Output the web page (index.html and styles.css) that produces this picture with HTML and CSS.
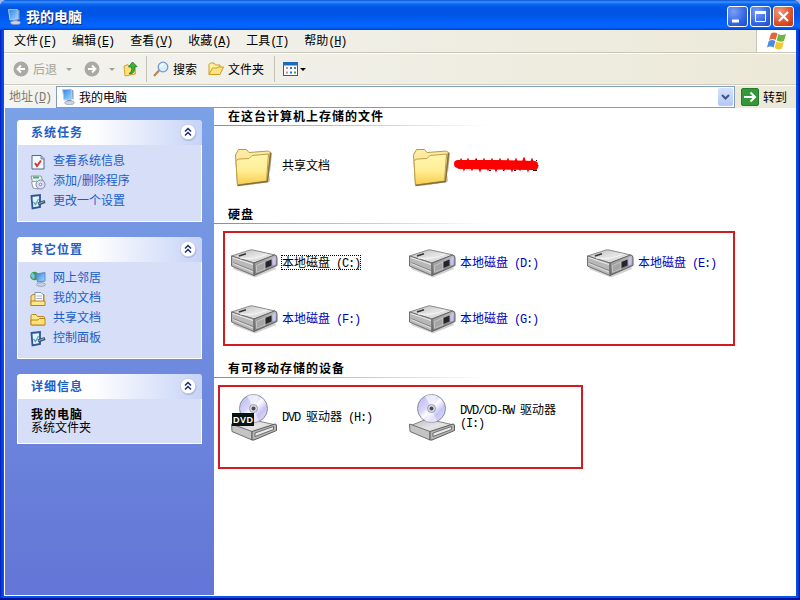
FILE: index.html
```html
<!DOCTYPE html>
<html lang="zh-CN">
<head>
    <meta charset="UTF-8">
    <title>我的电脑</title>
    <link rel="stylesheet" href="styles.css">
</head>
<body>
    <!-- Shared icons -->
    <svg class="sprite" width="0" height="0">
        <defs>
            <linearGradient id="gFolder" x1="0" y1="0" x2="0" y2="1">
                <stop offset="0" stop-color="#fff6b0"/>
                <stop offset="0.55" stop-color="#ffed93"/>
                <stop offset="1" stop-color="#f8cb4c"/>
            </linearGradient>
            <linearGradient id="gTop" x1="0" y1="0" x2="1" y2="1">
                <stop offset="0" stop-color="#b5b5b5"/>
                <stop offset="0.5" stop-color="#e4e4e4"/>
                <stop offset="1" stop-color="#d0d0d0"/>
            </linearGradient>
            <linearGradient id="gSide" x1="0" y1="0" x2="0" y2="1">
                <stop offset="0" stop-color="#bdbdbd"/>
                <stop offset="1" stop-color="#747474"/>
            </linearGradient>
            <linearGradient id="gDisc" x1="0" y1="0" x2="1" y2="1">
                <stop offset="0" stop-color="#b9b7ec"/>
                <stop offset="0.38" stop-color="#d7d5fa"/>
                <stop offset="0.5" stop-color="#ffffff"/>
                <stop offset="0.7" stop-color="#c5c2f5"/>
                <stop offset="1" stop-color="#e9e8ff"/>
            </linearGradient>
            <linearGradient id="gScreen" x1="0" y1="0" x2="1" y2="1">
                <stop offset="0" stop-color="#2f7fe0"/>
                <stop offset="1" stop-color="#a3ddff"/>
            </linearGradient>
        </defs>
        <symbol id="folder" viewBox="0 0 48 48">
            <path d="M7 46 L39 41 L42 12 L39 10 L40 40 Z" fill="#8a7444" opacity="0.6"/>
            <path d="M5.500 14 L8.500 8.500 H16.500 L19 11.500 L38.500 10 L40.500 12 L37.500 40 L7.500 44 Z" fill="#ffeaa0" stroke="#b49a4c"/>
            <path d="M6 20.500 Q6.500 18.500 9 18 L19 17.500 L22 14.500 L38.500 13 L36.500 40 L7.500 44 Z" fill="url(#gFolder)" stroke="#bd9f48"/>
            <path d="M7.500 44.500 L37.500 40.500 L40.500 12" fill="none" stroke="#84703f" stroke-width="1.500"/>
        </symbol>
        <symbol id="drive" viewBox="0 0 48 48">
            <path d="M4 28 L24 36 L45 28 L46 30 L25 38.500 L3 30 Z" fill="#777" opacity="0.35"/>
            <path d="M1.500 17 L20 11 Q21 10.600 23 11 L45 16 L24 24 Z" fill="url(#gTop)" stroke="#8a8a8a"/>
            <path d="M1.500 17 L24 24 V36.500 L1.500 27 Z" fill="#b8b8b8" stroke="#707070"/>
            <path d="M2.500 18.500 L23 25.500" stroke="#ededed"/>
            <path d="M3 23.500 L23 31.500" stroke="#777" stroke-width="0.800"/>
            <path d="M3 24.500 L23 33" stroke="#e2e2e2"/>
            <path d="M24 24 L44.500 16 Q47 16 47 19 V26.500 L24 36.500 Z" fill="url(#gSide)" stroke="#606060"/>
            <path d="M26.500 26.500 L35 23 V30 L26.500 33.500 Z" fill="#a5a5a5" stroke="#ddd" stroke-width="0.600"/>
            <path d="M35.500 23 L41.500 20.500 V26.500 L35.500 29 Z" fill="#24242c"/>
            <path d="M42.500 19 L45.500 18 V25.500 L42.500 26.500 Z" fill="#c6c3f4"/>
            <path d="M9 17 L16 14.800" stroke="#333" stroke-width="1.500"/>
            <path d="M10 19 Q25 21 37 15" fill="none" stroke="#f8f8f8"/>
        </symbol>
        <symbol id="optical" viewBox="0 0 48 48">
            <path d="M1.500 33 L19 26 L46 32 L26 41 Z" fill="url(#gTop)" stroke="#858585"/>
            <circle cx="23.500" cy="15.500" r="14" fill="url(#gDisc)" stroke="#8b8b9b"/>
            <path d="M23.500 15.500 L17 3 Q23 0 29 3 Z" fill="#fff" opacity="0.600"/>
            <path d="M23.500 15.500 L17 28 Q23 31 29 28 Z" fill="#fff" opacity="0.500"/>
            <circle cx="23.500" cy="15.500" r="4" fill="#dcdcea" stroke="#9c9cac"/>
            <circle cx="23.500" cy="15.500" r="2" fill="#4b4b55"/>
            <path d="M1.500 31 L22 38.500 V47 L2 38.500 Z" fill="#c4c4c4" stroke="#707070"/>
            <path d="M22 38.500 L45 31 Q46.500 31 46.500 33 V37.500 L24 47 L22 47 Z" fill="#b5b5b5" stroke="#5b5b5b"/>
            <path d="M25 40 L43.500 33.500 V36.500 L25 43.500 Z" fill="#e9e9e9" stroke="#555" stroke-width="0.800"/>
        </symbol>
        <symbol id="computer" viewBox="0 0 16 16">
            <path d="M2.500 0.500 L11 0 L12.500 10 L4 11 Z" fill="url(#gScreen)" stroke="#b4cbea"/>
            <path d="M11.500 0.500 L13.500 1.500 V11 L12.500 10 Z" fill="#8b9fc0"/>
            <path d="M7 11 L11 10.500 L12 13 H7 Z" fill="#8998b4"/>
            <ellipse cx="9.500" cy="13.700" rx="5" ry="1.900" fill="#cfd5e4" stroke="#7f8dab" stroke-width="0.600"/>
        </symbol>
        <symbol id="small-folder" viewBox="0 0 16 16">
            <path d="M1 5 Q1 3.500 2.500 3.500 H6 L7.500 5.500 H13.500 Q14.500 5.500 14.500 7 V14 H2 Q1 14 1 13 Z" fill="#ffe88c" stroke="#ba8518"/>
            <path d="M1 14 V9 H8 L9.500 7.500 H15 V14 Z" fill="#ffe175" stroke="#bb851b"/>
        </symbol>
        <symbol id="open-folder" viewBox="0 0 16 16">
            <path d="M1 13.500 V3.500 L2.500 2 H6 L7.500 4 H12 V7" fill="#fff0a5" stroke="#d29b24"/>
            <path d="M1 13.500 L4.500 7 H9 L10 6 H15.500 L12 13.500 Z" fill="#ffe382" stroke="#d29b24"/>
        </symbol>
        <symbol id="panel-icon" viewBox="0 0 16 16">
            <path d="M1.500 2 L10 1 V13 L2.500 14.500 Z" fill="#dff4ff" stroke="#31558f" stroke-width="1.800"/>
            <path d="M3.500 8 L5.500 10.500 L8.500 5" fill="none" stroke="#55a6d4" stroke-width="1.300"/>
            <path d="M8 10 L15 7.500" stroke="#35506e" stroke-width="3"/>
            <path d="M8.500 9.700 L14 7.700" stroke="#9dba9d"/>
        </symbol>
        <symbol id="chevrons" viewBox="0 0 18 18">
            <circle cx="9.500" cy="10" r="8" fill="#8e9cc4" opacity="0.600"/>
            <circle cx="9" cy="9" r="7.700" fill="#fff" stroke="#b8c3e0" stroke-width="0.700"/>
            <path d="M6 8.500 L9 5.500 L12 8.500 M6 12.500 L9 9.500 L12 12.500" fill="none" stroke="#162d72" stroke-width="1.500"/>
        </symbol>
    </svg>

    <div class="window">
        <header class="title-bar">
            <svg class="icon"><use href="#computer"/></svg>
            <h1>我的电脑</h1>
            <div class="window-buttons">
                <span class="window-button"><svg viewBox="0 0 19 19"><path d="M4 14 h7" stroke="#fff" stroke-width="3"/></svg></span>
                <span class="window-button"><svg viewBox="0 0 19 19"><path d="M4 5.500 h11" stroke="#fff" stroke-width="3"/><path d="M4.500 5 v9.500 h10 V5" fill="none" stroke="#fff"/></svg></span>
                <span class="window-button close"><svg viewBox="0 0 19 19"><path d="M5 5 L14 14 M14 5 L5 14" stroke="#fff" stroke-width="2.200"/></svg></span>
            </div>
        </header>

        <nav class="menu-bar">
            <span class="menu">文件<span class="latin">(<u>F</u>)</span></span>
            <span class="menu">编辑<span class="latin">(<u>E</u>)</span></span>
            <span class="menu">查看<span class="latin">(<u>V</u>)</span></span>
            <span class="menu">收藏<span class="latin">(<u>A</u>)</span></span>
            <span class="menu">工具<span class="latin">(<u>T</u>)</span></span>
            <span class="menu">帮助<span class="latin">(<u>H</u>)</span></span>
            <div class="flag">
                <svg width="20" height="18" viewBox="0 0 20 18">
                    <path d="M4 1.500 Q7 -0.500 10.500 1.500 L8.700 8 Q6 6 2 8 Z" fill="#e8653a"/>
                    <path d="M11.500 2 Q14 4 19 2 L17 9 Q13 10.500 9.700 8.500 Z" fill="#71b543"/>
                    <path d="M1.700 9 Q5 7 8.400 9 L6.700 15.500 Q3.500 13.500 0 15.500 Z" fill="#4b8be0"/>
                    <path d="M9.400 9.500 Q12.500 11.500 16.700 10 L15 16.500 Q11 18.500 7.600 16 Z" fill="#f6c62e"/>
                </svg>
            </div>
        </nav>

        <div class="toolbar">
            <svg class="round" viewBox="0 0 16 16"><circle cx="8" cy="8" r="7.500" fill="#aaa9a2"/><path d="M12 8 H5 M8 4.500 L4.500 8 L8 11.500" fill="none" stroke="#fff" stroke-width="1.800"/></svg>
            <span class="tool-label disabled">后退</span>
            <span class="arrow disabled"></span>
            <svg class="round forward" viewBox="0 0 16 16"><circle cx="8" cy="8" r="7.500" fill="#aaa9a2"/><path d="M4 8 H11 M8 4.500 L11.500 8 L8 11.500" fill="none" stroke="#fff" stroke-width="1.800"/></svg>
            <span class="arrow disabled"></span>
            <svg class="up" viewBox="0 0 16 16">
                <path d="M1 5 L5 3.500 L6 5 L12 4 L12.500 13 L2 15 Z" fill="#ffe07a" stroke="#d7a331"/>
                <path d="M6 12.500 Q9.500 11 8.500 6 H5.500 L9.500 1 L14 5.500 L11.500 6 Q12 11.500 8 13 Z" fill="#3eb13b" stroke="#157a1d" stroke-width="0.800"/>
            </svg>
            <span class="separator"></span>
            <svg class="icon" viewBox="0 0 16 16"><path d="M1 15 L6 9.500" stroke="#b78267" stroke-width="2.200"/><circle cx="10" cy="6" r="4.800" fill="#d9f1ff" stroke="#7696c8" stroke-width="1.300"/><path d="M7.500 5.500 Q8.500 3 11 3" fill="none" stroke="#fff" stroke-width="1.500"/></svg>
            <span class="tool-label search">搜索</span>
            <svg class="icon"><use href="#open-folder"/></svg>
            <span class="tool-label">文件夹</span>
            <span class="separator second"></span>
            <svg class="icon" viewBox="0 0 16 16">
                <rect x="0.500" y="1.500" width="14" height="13" fill="#fff" stroke="#1765b5"/><path d="M0 3 h15" stroke="#1b6cc0" stroke-width="3"/>
                <path d="M3 7 h2 M3 11.500 h2" stroke="#cf8b93" stroke-width="2"/><path d="M7 7 h2 M7 11.500 h2" stroke="#3567c7" stroke-width="2"/><path d="M11 7 h2 M11 11.500 h2" stroke="#3c9a59" stroke-width="2"/>
            </svg>
            <span class="arrow views"></span>
        </div>

        <div class="address-bar">
            <span class="address-label">地址<span class="latin">(<u>D</u>)</span></span>
            <div class="address-field">
                <svg class="icon"><use href="#computer"/></svg>
                <span>我的电脑</span>
                <span class="drop"><svg viewBox="0 0 15 18"><path d="M4 7 L7.500 10.500 L11 7" fill="none" stroke="#40547f" stroke-width="2"/></svg></span>
            </div>
            <svg class="go" viewBox="0 0 18 18"><rect x="0.500" y="0.500" width="17" height="17" rx="1.500" fill="#35973a" stroke="#247b2b"/><path d="M3 9 H14 M9.500 4.500 L14 9 L9.500 13.500" fill="none" stroke="#fff" stroke-width="2"/></svg>
            <span>转到</span>
        </div>

        <div class="main">
            <aside class="sidebar">
                <section class="panel tasks">
                    <h2>系统任务<svg><use href="#chevrons"/></svg></h2>
                    <ul>
                        <li><svg class="icon" viewBox="0 0 16 16"><path d="M2 1.500 H11 L14 4.500 V15 H2 Z" fill="#f4f8ff" stroke="#51678f"/><path d="M11 1.500 V5 H14" fill="#a8bddb" stroke="#51678f" stroke-width="0.700"/><path d="M5 9 L7 12 L11 6.500" fill="none" stroke="#d4382d" stroke-width="2"/></svg>查看系统信息</li>
                        <li><svg class="icon" viewBox="0 0 16 16"><path d="M1 2 H11 L13 7 V10 H3 Z" fill="#eef3f5" stroke="#8898a5"/><path d="M3 3.500 H9" stroke="#4cac66" stroke-width="2"/><path d="M1.500 8 L7 7 L8 15 L3 14 Z" fill="#fff" stroke="#8c9cac"/><circle cx="10.500" cy="10.500" r="4.500" fill="#dfddf6" stroke="#7f86a2"/><circle cx="10.500" cy="10.500" r="1.300" fill="#fff" stroke="#7f86a2"/></svg>添加/删除程序</li>
                        <li><svg class="icon"><use href="#panel-icon"/></svg>更改一个设置</li>
                    </ul>
                </section>
                <section class="panel places">
                    <h2>其它位置<svg><use href="#chevrons"/></svg></h2>
                    <ul>
                        <li><svg class="icon" viewBox="0 0 16 16"><circle cx="4.500" cy="5" r="4.300" fill="#3a9b52"/><path d="M2 2 Q6 3 4 8 Q1 7 1 4" fill="#77c7e8"/><path d="M6 3 L15 1.500 V10 L7.500 11 Z" fill="url(#gScreen)" stroke="#6689bb"/><ellipse cx="11" cy="13.500" rx="4.500" ry="1.900" fill="#cbd1de" stroke="#7c87a1" stroke-width="0.600"/></svg>网上邻居</li>
                        <li><svg class="icon" viewBox="0 0 16 16"><path d="M1 14.500 V5 L3 3.500 H14 V14.500 Z" fill="#ffe27c" stroke="#b9831b"/><path d="M5 1.500 H11 L13.500 4 V11 H5 Z" fill="#fff" stroke="#8295ba"/><path d="M6.500 5 H12 M6.500 7.500 H12" stroke="#9bb0d4"/><path d="M1 14.500 V10 H15 V14.500 Z" fill="#ffe688" stroke="#b9831b"/></svg>我的文档</li>
                        <li><svg class="icon"><use href="#small-folder"/></svg>共享文档</li>
                        <li><svg class="icon"><use href="#panel-icon"/></svg>控制面板</li>
                    </ul>
                </section>
                <section class="panel details">
                    <h2>详细信息<svg><use href="#chevrons"/></svg></h2>
                    <p><b>我的电脑</b><br>系统文件夹</p>
                </section>
            </aside>

            <main class="content">
                <h3>在这台计算机上存储的文件</h3>
                <div class="files items">
                    <div class="item"><svg><use href="#folder"/></svg><span>共享文档</span></div>
                    <div class="item">
                        <svg><use href="#folder"/></svg>
                        <svg class="scribble" viewBox="0 0 88 16"><path d="M4 7 H42 L80 8 M6 8 L80 9" stroke="#f00" stroke-width="8" stroke-linecap="round"/><path d="M3 8 L7 3 L10 12 L14 3 L18 12 L22 3 L26 13 L30 3 L34 12 L38 3 L42 13 L46 3 L50 12 L54 3 L58 13 L62 3 L66 12 L70 2 L74 13 L78 3 L82 12 L84 8" fill="none" stroke="#f00" stroke-width="2"/><path d="M22 2.500 h1 M35 13.500 h2 M49 13.500 h1 M60 13.500 h2 M79 13.500 h4 M82 3.500 h1" stroke="#200"/></svg>
                    </div>
                </div>

                <h3>硬盘</h3>
                <div class="drives items marked">
                    <div class="item"><svg><use href="#drive"/></svg><span class="focused">本地磁盘<span class="latin"> (C:)</span></span></div>
                    <div class="item"><svg><use href="#drive"/></svg><span>本地磁盘<span class="latin"> (D:)</span></span></div>
                    <div class="item"><svg><use href="#drive"/></svg><span>本地磁盘<span class="latin"> (E:)</span></span></div>
                    <div class="item"><svg><use href="#drive"/></svg><span>本地磁盘<span class="latin"> (F:)</span></span></div>
                    <div class="item"><svg><use href="#drive"/></svg><span>本地磁盘<span class="latin"> (G:)</span></span></div>
                </div>

                <h3>有可移动存储的设备</h3>
                <div class="removable items marked">
                    <div class="item">
                        <svg viewBox="0 0 48 48"><use href="#optical" width="48" height="48"/><rect x="2" y="20" width="22" height="13" fill="#061414"/><text class="dvd" x="3" y="30" textLength="20">DVD</text></svg>
                        <span><span class="latin">DVD </span>驱动器<span class="latin"> (H:)</span></span>
                    </div>
                    <div class="item"><svg><use href="#optical"/></svg><span><span class="latin">DVD/CD-RW </span>驱动器<br><span class="latin">(I:)</span></span></div>
                </div>
            </main>
        </div>
    </div>
</body>
</html>
```
FILE: styles.css
```css
:root {
    --chrome: #ece9d8;
    --link: #215dc6;
    --mark: #d41920;
}

* {
    box-sizing: border-box;
    margin: 0;
    padding: 0;
}

body {
    width: 800px;
    height: 600px;
    overflow: hidden;
    background: #9db9eb;
    font: 12px/12px "Noto Sans CJK SC", sans-serif;
    color: #000;
}

svg {
    display: block;
    flex: none;
}

.sprite {
    position: absolute;
}

.icon {
    width: 16px;
    height: 16px;
}

/* half-width characters, 6px each */
.latin {
    font-family: "Liberation Mono", monospace;
    font-size: 12px;
    line-height: 10px;
    letter-spacing: -1.2px;
    white-space: pre;
}

.window {
    display: flex;
    flex-direction: column;
    height: 600px;
    padding: 0 4px 4px;
    border-radius: 7px 7px 0 0;
    background: linear-gradient(90deg, #0020bd 0, #0b3fe4 2px, #0855e8 4px, #0855e8 796px, #0b3fe4 798px, #00129a 800px);
    box-shadow: inset 0 -2px #00129a;
}

.title-bar {
    display: flex;
    align-items: center;
    height: 30px;
    margin: 0 -4px;
    padding: 3px 6px 0 6px;
    border-radius: 7px 7px 0 0;
    background: linear-gradient(#0a52d8 0, #3a93ff 2px, #0867f1 4px, #0055e3 8px, #0054e5 15px, #0261fb 22px, #0366ff 27px, #003fcf 30px);
}

.title-bar h1 {
    margin: -2px 0 0 4px;
    font-size: 14px;
    line-height: 16px;
    color: #fff;
    text-shadow: 1px 1px #0a2c88;
}

.window-buttons {
    display: flex;
    gap: 2px;
    margin-left: auto;
}

.window-button {
    width: 21px;
    height: 21px;
    border: 1px solid #fff;
    border-radius: 3px;
    background: radial-gradient(circle at 30% 25%, #7b9ff5, #3465e5 60%, #1c4bcb);
}

.window-button.close {
    background: radial-gradient(circle at 30% 25%, #f09a7c, #df4f27 60%, #bd330f);
}

.menu-bar {
    display: flex;
    align-items: center;
    height: 23px;
    padding-left: 2px;
    border-bottom: 1px solid #c9c6b7;
    background: linear-gradient(90deg, #f3f3f0, var(--chrome));
}

.menu {
    padding: 0 8px 1px;
}

.flag {
    display: flex;
    align-items: center;
    justify-content: center;
    width: 40px;
    height: 22px;
    margin-left: auto;
    border-left: 1px solid #c9c6b7;
    background: #fff;
}

.toolbar {
    display: flex;
    align-items: center;
    height: 32px;
    padding-left: 9px;
    border-top: 1px solid #fff;
    border-bottom: 1px solid #cfccbd;
    background: linear-gradient(90deg, #f3f3f0, var(--chrome));
}

.round {
    width: 16px;
    height: 16px;
}

.tool-label {
    margin-left: 4px;
}

.tool-label.search {
    margin-right: 11px;
}

.disabled {
    color: #a5a396;
}

.arrow {
    margin-left: 9px;
    border: 3px solid transparent;
    border-top-color: currentColor;
    border-bottom: 0;
}

.forward {
    margin-left: 12px;
}

.up {
    width: 16px;
    height: 16px;
    margin-left: 8px;
}

.separator {
    width: 1px;
    height: 26px;
    margin: 0 6px 0 7px;
    background: #c5c2b3;
}

.separator.second {
    margin: 0 8px 0 10px;
}

.arrow.views {
    margin-left: 1px;
}

.address-bar {
    display: flex;
    align-items: center;
    height: 23px;
    padding-left: 5px;
    border-top: 1px solid #fff;
    background: linear-gradient(90deg, #f3f3f0, var(--chrome));
}

.address-label {
    width: 47px;
    padding-bottom: 2px;
    color: #7d7b70;
}

.address-field {
    display: flex;
    align-items: center;
    gap: 3px;
    width: 679px;
    height: 22px;
    padding: 0 1px 0 3px;
    border: 1px solid #7f9db9;
    background: #fff;
}

.drop {
    width: 15px;
    height: 18px;
    margin-left: auto;
    border-radius: 2px;
    background: linear-gradient(#d5e0fd, #b3c8f6);
}

.go {
    width: 18px;
    height: 18px;
    margin: 0 4px 0 6px;
}

.main {
    display: flex;
    flex: 1;
    border-bottom: 1px solid #fff;
    border-left: 1px solid #fff;
    background: #fff;
}

.sidebar {
    width: 209px;
    padding: 12px;
    background: linear-gradient(#7ba2e7, #6375d6);
}

.panel {
    width: 185px;
    margin-bottom: 15px;
    border: 1px solid #fff;
    border-top: 0;
    border-radius: 4px 4px 0 0;
    background: #d6dff7;
}

.tasks {
    height: 102px;
}

.places {
    height: 122px;
}

.details {
    height: 70px;
}

.panel h2 {
    display: flex;
    align-items: center;
    justify-content: space-between;
    height: 25px;
    margin: 0 -1px;
    padding: 0 5px 2px 14px;
    border-radius: 4px 4px 0 0;
    background: linear-gradient(90deg, #fff 40%, #c6d3f7);
    font-size: 12px;
    letter-spacing: 1px;
    color: var(--link);
}

.panel h2 svg {
    width: 18px;
    height: 18px;
}

.panel ul {
    padding: 5px 0 0 12px;
    list-style: none;
}

.panel li {
    display: flex;
    align-items: center;
    gap: 7px;
    height: 20px;
    color: var(--link);
}

.panel li svg {
    margin-top: 4px;
}

.panel p {
    padding: 8px 13px;
    line-height: 13px;
}

.panel b {
    letter-spacing: 1px;
}

.content {
    flex: 1;
}

.content h3 {
    height: 18px;
    padding: 2px 0 0 14px;
    background: linear-gradient(90deg, #5b94e0, #fff 275px) bottom / 100% 1px no-repeat;
    font-size: 12px;
    letter-spacing: 1px;
}

.items {
    display: grid;
    grid-template-columns: repeat(3, 178px);
    grid-auto-rows: 56px;
}

.item {
    display: flex;
    align-items: center;
    gap: 4px;
}

.item > svg {
    width: 48px;
    height: 48px;
}

.files {
    height: 80px;
    padding: 11px 0 0 16px;
}

.item > .scribble {
    width: 88px;
    height: 16px;
    margin-left: -6px;
}

.marked {
    border: 2px solid var(--mark);
}

.marked .item > span {
    margin-bottom: 2px;
}

.drives {
    width: 512px;
    height: 115px;
    margin: 7px 0 14px 9px;
    padding: 2px 0 0 5px;
    color: #0000c0;
}

.focused {
    outline: 1px dotted #000;
    color: #000;
}

.removable {
    width: 365px;
    height: 84px;
    margin: 7px 0 0 4px;
    padding: 2px 0 0 10px;
}

.dvd {
    font: bold 9px "Liberation Sans", sans-serif;
    fill: #fff;
}
```
